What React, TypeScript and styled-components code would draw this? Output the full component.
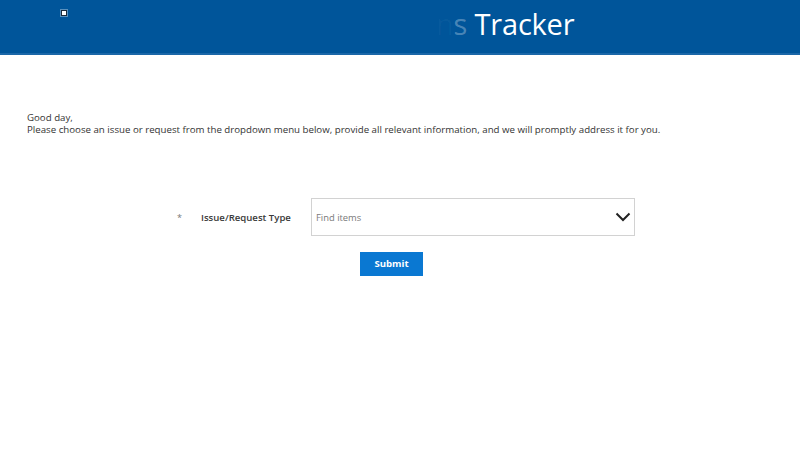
import styled, { createGlobalStyle } from "styled-components";

const GlobalStyle = createGlobalStyle`
  html, body {
    margin: 0;
    padding: 0;
    background: #ffffff;
    font-family: "Open Sans", "Noto Sans", "Liberation Sans", sans-serif;
  }
`;

const Page = styled.div`
  width: 800px;
  min-height: 475px;
  background: #ffffff;
`;

const Header = styled.header`
  height: 53px;
  background: #00559a;
  border-bottom: 2px solid #1a67a8;
  display: flex;
  align-items: flex-start;
`;

const LogoMark = styled.span`
  width: 4px;
  height: 4px;
  margin: 10px 0 0 61px;
  background: #ffffff;
  border: 1px solid #1b2a3a;
  box-shadow: 0 0 0 1px rgba(255, 255, 255, 0.35);
  flex-shrink: 0;
`;

const Title = styled.h1`
  margin: 4px 0 0 369px;
  font-family: "Open Sans", "Noto Sans", sans-serif;
  font-size: 29px;
  font-weight: 400;
  line-height: 40px;
  color: #ffffff;
  white-space: nowrap;
  letter-spacing: -0.2px;
`;

const Faded = styled.span<{ $alpha: number }>`
  color: rgba(255, 255, 255, ${(p) => p.$alpha});
`;

const Intro = styled.div`
  padding: 57px 0 0 27px;
  font-size: 9.7px;
  line-height: 11.5px;
  color: #333333;
`;

const Form = styled.form`
  margin-top: 63px;
  padding-left: 177px;
  display: flex;
  flex-direction: column;
`;

const Row = styled.div`
  display: flex;
  align-items: center;
`;

const Required = styled.span`
  width: 24px;
  font-size: 9px;
  color: #777777;
`;

const Label = styled.label`
  width: 110px;
  font-size: 9.6px;
  font-weight: 600;
  color: #3a3a3a;
`;

const Combo = styled.div`
  width: 324px;
  height: 38px;
  border: 1px solid #d2d2d2;
  display: flex;
  align-items: center;
  justify-content: space-between;
  padding: 0 2px 0 4px;
  box-sizing: border-box;
`;

const Placeholder = styled.span`
  font-size: 9.4px;
  color: #7a7a7a;
`;

const Chevron = () => (
  <svg width="18" height="18" viewBox="0 0 18 18" aria-hidden="true">
    <path d="M2.5 5.5 L9 12 L15.5 5.5" fill="none" stroke="#222" strokeWidth="2" />
  </svg>
);

const Actions = styled.div`
  margin-top: 14px;
  padding-left: 183px;
`;

const SubmitButton = styled.button`
  width: 63px;
  height: 24px;
  border: none;
  background: #0a78d2;
  color: #ffffff;
  font-family: "Open Sans", "Noto Sans", sans-serif;
  font-size: 9.6px;
  font-weight: 700;
  cursor: pointer;
  padding: 0;
`;

export default function App() {
  return (
    <Page>
      <GlobalStyle />
      <Header>
        <LogoMark />
        <Title>
          <Faded $alpha={0.03}>n</Faded>
          <Faded $alpha={0.3}>s</Faded> Tracker
        </Title>
      </Header>
      <Intro>
        Good day,
        <br />
        Please choose an issue or request from the dropdown menu below, provide all relevant
        information, and we will promptly address it for you.
      </Intro>
      <Form onSubmit={(e) => e.preventDefault()}>
        <Row>
          <Required>*</Required>
          <Label>Issue/Request Type</Label>
          <Combo>
            <Placeholder>Find items</Placeholder>
            <Chevron />
          </Combo>
        </Row>
        <Actions>
          <SubmitButton type="submit">Submit</SubmitButton>
        </Actions>
      </Form>
    </Page>
  );
}
